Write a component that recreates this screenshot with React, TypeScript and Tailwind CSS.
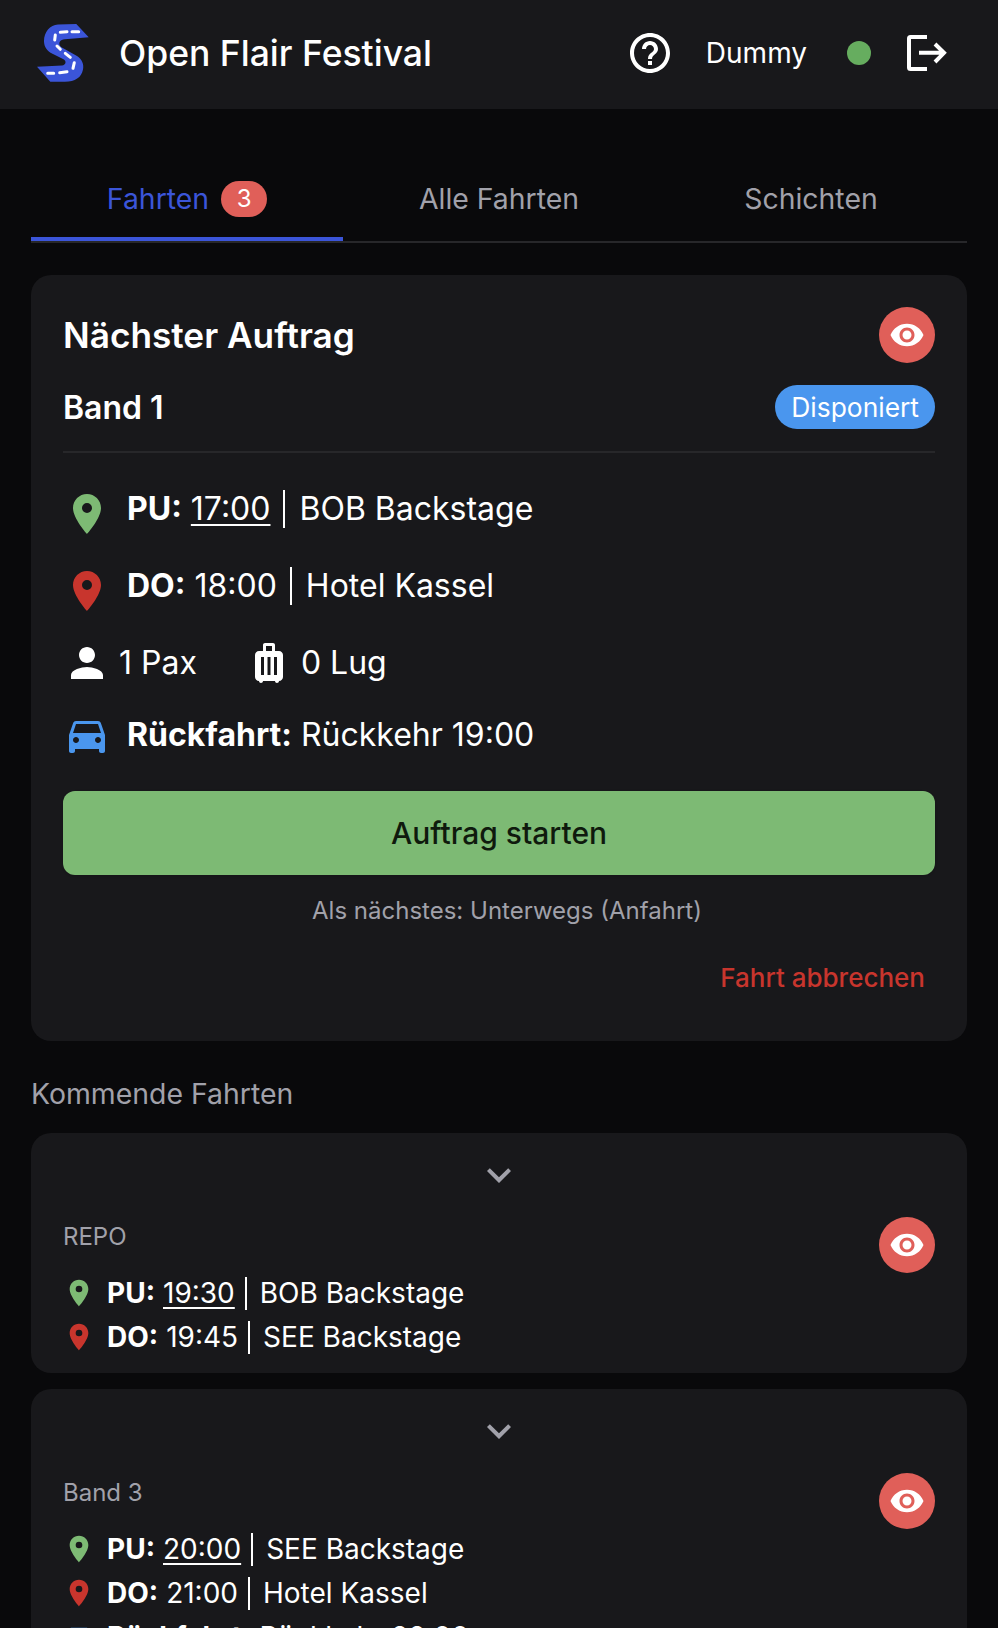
import { MdPlace, MdPerson, MdLuggage, MdDirectionsCar, MdVisibility, MdExpandMore, MdHelpOutline } from "react-icons/md";

function Logo() {
  return (
    <svg width="52" height="58" viewBox="0 0 52 58" className="shrink-0">
      <path d="M39.3 0 L51.7 13.3 L28 15.3 C23 15.8 20.5 19 24 23 L40 32 C45 35.5 47 40 46 45.5 C44.5 53.5 38 57.7 28 57.7 L13.3 57.7 L0 42.7 L25 41.5 C29 41 30 37 26 35 L14 29 C8.5 25.5 7 21 7 17 C7 8 13 1 21 0.5 Z" fill="#3b55d9" />
      <path d="M41.7 7.7 H35 M30 7.7 L23.3 8.3 M18.3 11 L17.7 16 M20 22 L23.3 25.3 M28.3 29.3 L33.3 33.3 M37.3 38.7 L36 44.3 M30 47.7 L22.7 48.7 M16.7 49.3 H10.7" stroke="#fff" strokeWidth="3" strokeLinecap="round" fill="none" />
    </svg>
  );
}

function Logout() {
  return (
    <svg width="40" height="36" viewBox="0 0 40 36" fill="none" stroke="#fff" strokeWidth="4" className="block">
      <path d="M20 2 H3.5 a1.5 1.5 0 0 0 -1.5 1.5 V32.5 a1.5 1.5 0 0 0 1.5 1.5 H20" />
      <path d="M12 17.8 H37 M28 9 L37 17.8 L28 27" />
    </svg>
  );
}

function Eye() {
  return (
    <button className="w-14 h-14 rounded-full bg-[#e05f59] flex items-center justify-center shrink-0">
      <MdVisibility size={36} color="#fff" />
    </button>
  );
}

function BigStop({ color, label, time, place, underline }: { color: string; label: string; time: string; place: string; underline?: boolean }) {
  return (
    <div className="flex items-center h-12 text-[32px]">
      <MdPlace size={48} color={color} className="shrink-0 mt-2.5 mr-4" />
      <span className="font-bold">{label}</span>
      <span className={underline ? "ml-[9px] underline underline-offset-4 decoration-2" : "ml-[9px]"}>{time}</span>
      <span className="ml-[13px] w-[2px] h-[38px] bg-white" />
      <span className="ml-[14px]">{place}</span>
    </div>
  );
}

function Stop({ color, label, time, place, underline }: { color: string; label: string; time: string; place: string; underline?: boolean }) {
  return (
    <div className="flex items-center h-11 text-[28px]">
      <MdPlace size={32} color={color} className="shrink-0 mr-3" />
      <span className="font-bold">{label}</span>
      <span className={underline ? "ml-2 underline underline-offset-4 decoration-2" : "ml-2"}>{time}</span>
      <span className="ml-[10px] w-[2px] h-[33px] bg-white" />
      <span className="ml-[13px]">{place}</span>
    </div>
  );
}

function Upcoming({ title, pu, pudest, dO, dest, extra }: { title: string; pu: string; pudest: string; dO: string; dest: string; extra?: boolean }) {
  return (
    <section className="bg-[#18181b] rounded-[20px] px-8 pt-[21px] pb-[14px] mb-4 overflow-hidden shrink-0">
      <div className="flex justify-center h-[42px] items-center">
        <MdExpandMore size={48} color="#a1a1aa" />
      </div>
      <div className="flex justify-between mt-[21px]">
        <div className="flex-1 min-w-0">
          <div className="text-[24px] text-[#a1a1aa] mt-1 mb-[18px] leading-8">{title}</div>
          <Stop color="#7dba74" label="PU:" time={pu} place={pudest} underline />
          <Stop color="#c8352d" label="DO:" time={dO} place={dest} />
          {extra && (
            <div className="flex items-center h-11 text-[28px]">
              <MdDirectionsCar size={32} color="#4a96ee" className="shrink-0 mr-3" />
              <span className="font-bold">Rückfahrt:</span>
              <span className="ml-2">Rückkehr 22:00</span>
            </div>
          )}
        </div>
        <Eye />
      </div>
    </section>
  );
}

export default function App() {
  return (
    <div className="w-[998px] h-[1628px] overflow-hidden bg-[#09090b] text-white font-['Inter',sans-serif] flex flex-col">
      <header className="h-[109px] bg-[#18181b] flex items-center pl-[37px] pr-[51px] pb-1 shrink-0">
        <Logo />
        <h1 className="ml-[30px] pt-0.5 text-[35.5px] font-medium leading-none">Open Flair Festival</h1>
        <MdHelpOutline size={48} color="#fff" className="ml-auto -translate-x-px" />
        <span className="ml-[31px] text-[28px] leading-none">Dummy</span>
        <span className="ml-[40px] w-6 h-6 rounded-full bg-[#66ad5f]" />
        <span className="ml-9"><Logout /></span>
      </header>
      <main className="px-[31px] flex flex-col flex-1 min-h-0">
        <nav className="flex h-[72px] mt-[62px] border-b-2 border-[#27272a] text-[28.4px] shrink-0">
          <div className="flex-1 border-b-4 border-[#3b55d9] text-[#3b55d9] flex items-center justify-center gap-3 pb-2.5">
            Fahrten
            <span className="bg-[#e05f59] text-white text-[24px] leading-none w-[46px] h-9 rounded-full flex items-center justify-center">3</span>
          </div>
          <div className="flex-1 text-[#a1a1aa] flex items-center justify-center pb-3.5">Alle Fahrten</div>
          <div className="flex-1 text-[#a1a1aa] flex items-center justify-center pb-3.5">Schichten</div>
        </nav>
        <section className="mt-8 bg-[#18181b] rounded-[20px] p-8 shrink-0 h-[766px]">
          <div className="flex items-center justify-between h-14">
            <h2 className="text-[35.2px] font-semibold">Nächster Auftrag</h2>
            <Eye />
          </div>
          <div className="flex items-center justify-between mt-[22px] pb-[22px] border-b-2 border-[#27272a]">
            <div className="text-[32px] font-semibold h-11 leading-[46px]">Band 1</div>
            <div className="bg-[#4a96ee] rounded-full h-11 px-4 pt-0.5 flex items-center text-[26.4px]">Disponiert</div>
          </div>
          <div className="mt-8 flex flex-col gap-[29px]">
            <BigStop color="#7dba74" label="PU:" time="17:00" place="BOB Backstage" underline />
            <BigStop color="#c8352d" label="DO:" time="18:00" place="Hotel Kassel" />
            <div className="flex items-center h-12 text-[32px]">
              <MdPerson size={48} className="shrink-0" />
              <span className="ml-2">1 Pax</span>
              <MdLuggage size={48} className="shrink-0 ml-12" />
              <span className="ml-2">0 Lug</span>
            </div>
          </div>
          <div className="flex items-center h-12 text-[32px] mt-6">
            <MdDirectionsCar size={48} color="#4a96ee" className="shrink-0 mr-4" />
            <span className="font-bold">Rückfahrt:</span>
            <span className="ml-[9px]">Rückkehr 19:00</span>
          </div>
          <button className="mt-8 w-full h-[84px] rounded-xl bg-[#7dba74] text-[#0f1a0d] text-[30px] font-medium shadow-sm">Auftrag starten</button>
          <div className="mt-[18px] pl-4 text-center text-[24px] leading-9 text-[#a1a1aa]">Als nächstes: Unterwegs (Anfahrt)</div>
          <div className="mt-[29px] pr-2.5 text-right text-[26px] leading-10 font-medium text-[#c8352d]">Fahrt abbrechen</div>
        </section>
        <h3 className="mt-[35px] mb-[21px] text-[28.4px] leading-9 text-[#a1a1aa] shrink-0">Kommende Fahrten</h3>
        <Upcoming title="REPO" pu="19:30" pudest="BOB Backstage" dO="19:45" dest="SEE Backstage" />
        <Upcoming title="Band 3" pu="20:00" pudest="SEE Backstage" dO="21:00" dest="Hotel Kassel" extra />
      </main>
    </div>
  );
}
